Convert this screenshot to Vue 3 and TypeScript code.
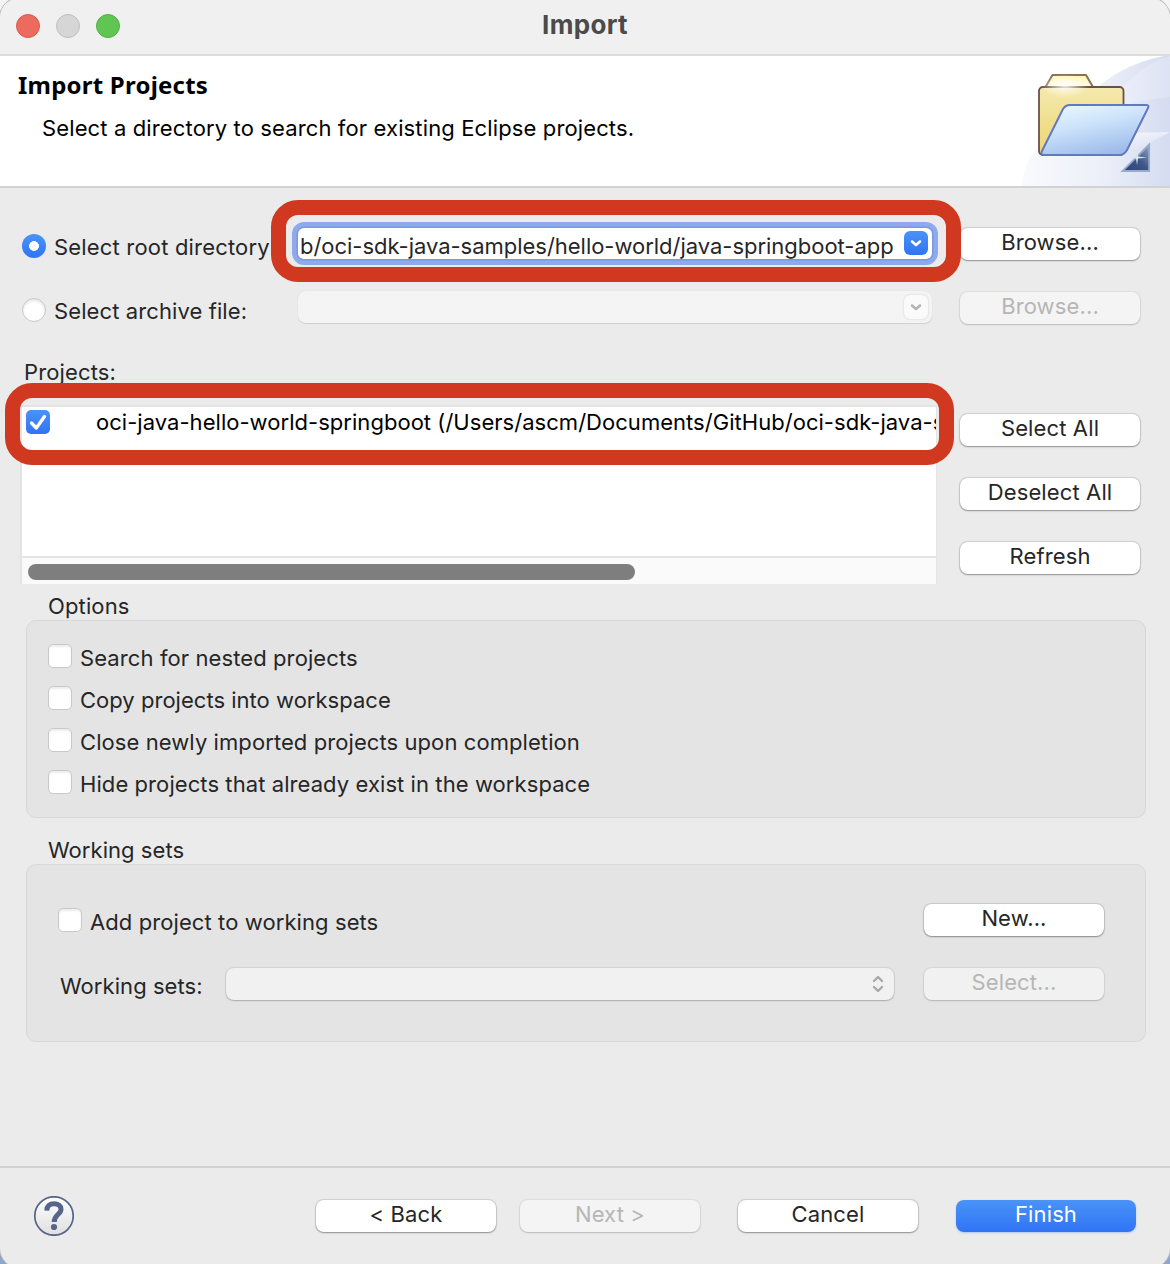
<script setup lang="ts">
import { ref } from 'vue'

interface Option {
  label: string
  spacing: string
  checked: boolean
}

const source = ref<'directory' | 'archive'>('directory')
const projectChecked = ref(true)
const addToSets = ref(false)
const options = ref<Option[]>([
  { label: 'Search for nested projects', spacing: '0.1px', checked: false },
  { label: 'Copy projects into workspace', spacing: '0.02px', checked: false },
  { label: 'Close newly imported projects upon completion', spacing: '0.08px', checked: false },
  { label: 'Hide projects that already exist in the workspace', spacing: '0.08px', checked: false },
])
</script>

<template>
  <div class="desktop">
    <div class="window">
      <header class="titlebar">
        <div class="lights">
          <i class="light close"></i>
          <i class="light minimize"></i>
          <i class="light zoom"></i>
        </div>
        <span class="title">Import</span>
      </header>

      <section class="banner">
        <div class="banner-text">
          <h1>Import Projects</h1>
          <p>Select a directory to search for existing Eclipse projects.</p>
        </div>
        <svg class="banner-art" width="150" height="130" viewBox="1020 56 150 130">
          <defs>
            <linearGradient id="swoosh" x1="0" x2="1" y1="0" y2="0">
              <stop offset="0" stop-color="#f9fafd" />
              <stop offset="0.55" stop-color="#eceff9" />
              <stop offset="1" stop-color="#d5dcf1" />
            </linearGradient>
            <linearGradient id="tab" x1="0" x2="0" y1="0" y2="1">
              <stop offset="0" stop-color="#fbf4b4" />
              <stop offset="1" stop-color="#fffbe0" />
            </linearGradient>
            <linearGradient id="back" x1="0" x2="0" y1="0" y2="1">
              <stop offset="0" stop-color="#f5e9ae" />
              <stop offset="1" stop-color="#ecd571" />
            </linearGradient>
            <linearGradient id="front" x1="0.25" x2="0.7" y1="0" y2="1">
              <stop offset="0" stop-color="#e8f6fe" />
              <stop offset="0.4" stop-color="#cbe2fa" />
              <stop offset="1" stop-color="#9ab8ea" />
            </linearGradient>
            <radialGradient id="shine">
              <stop offset="0" stop-color="#fff" />
              <stop offset="1" stop-color="#fff" stop-opacity="0" />
            </radialGradient>
            <linearGradient id="badge" x1="0" x2="1" y1="1" y2="0">
              <stop offset="0" stop-color="#29417a" />
              <stop offset="0.5" stop-color="#3d5688" />
              <stop offset="1" stop-color="#8ea3c6" />
            </linearGradient>
            <linearGradient id="haze" x1="0" x2="0" y1="0" y2="1">
              <stop offset="0" stop-color="#fff" stop-opacity="0.55" />
              <stop offset="1" stop-color="#fff" stop-opacity="0" />
            </linearGradient>
          </defs>
          <path d="M1022 186C1023 168 1030 155 1040 146L1092 92C1112 74 1136 60 1170 55V186Z" fill="url(#swoosh)" />
          <path d="M1100 118C1125 104 1145 99 1170 97V56C1140 66 1120 85 1100 118Z" fill="#fff" opacity="0.22" />
          <path d="M1128 133L1170 132C1158 138 1150 142 1140 150H1110Z" fill="url(#haze)" />
          <path d="M1045.500 87L1052.500 75H1086L1093 87Z" fill="url(#tab)" stroke="#8b6f5c" stroke-width="2" stroke-linejoin="round" />
          <rect x="1039" y="87" width="84.500" height="68" rx="4" fill="url(#back)" stroke="#6c4f49" stroke-width="1.800" />
          <ellipse cx="1065" cy="86" rx="24" ry="12" fill="url(#shine)" opacity="0.85" />
          <path d="M1070 105H1146Q1149.500 105 1148 108L1127 150Q1124 155 1120 155H1044Q1040 155 1042 151L1063 109Q1065.500 105 1070 105Z" fill="url(#front)" stroke="#6378c2" stroke-width="2" stroke-linejoin="round" />
          <path d="M1149.200 144.500V171H1122.500Z" fill="url(#badge)" stroke="#9aabc9" stroke-width="1.800" />
          <path d="M1137 149L1138 156.500L1147 157.500L1138 158.500L1137 165L1136 158.500L1129 157.500L1136 156.500Z" fill="#d8e8ee" />
        </svg>
      </section>

      <main class="content">
        <div class="source-row">
          <label class="source-label" @click="source = 'directory'">
            <i class="radio" :class="{ on: source === 'directory' }"></i>
            <span class="t-root">Select root directory</span>
          </label>
          <div class="combo focused">
            <span class="t-path">b/oci-sdk-java-samples/hello-world/java-springboot-app</span>
            <i class="drop">
              <svg width="24" height="24" viewBox="0 0 24 24"><path d="M8 10.500L12 14L16 10.500" /></svg>
            </i>
          </div>
          <button class="btn">Browse...</button>
        </div>

        <div class="source-row second">
          <label class="source-label" @click="source = 'archive'">
            <i class="radio" :class="{ on: source === 'archive' }"></i>
            <span class="t-archive">Select archive file:</span>
          </label>
          <div class="combo dim">
            <i class="drop">
              <svg width="24" height="24" viewBox="0 0 24 24"><path d="M8 10.500L12 14L16 10.500" /></svg>
            </i>
          </div>
          <button class="btn dim" disabled>Browse...</button>
        </div>

        <div class="projects-label">Projects:</div>
        <div class="projects">
          <div class="list">
            <div class="list-row" @click="projectChecked = !projectChecked">
              <i class="check" :class="{ on: projectChecked }">
                <svg v-if="projectChecked" width="24" height="24" viewBox="0 0 24 24"><path d="M5.500 13L10.300 18L18.500 6.500" /></svg>
              </i>
              <span class="t-item">oci-java-hello-world-springboot (/Users/ascm/Documents/GitHub/oci-sdk-java-s</span>
            </div>
            <div class="scroll"><div class="thumb"></div></div>
          </div>
          <div class="side">
            <button class="btn">Select All</button>
            <button class="btn">Deselect All</button>
            <button class="btn">Refresh</button>
          </div>
        </div>

        <div class="group-label t-options">Options</div>
        <div class="group options">
          <label v-for="o in options" :key="o.label" class="opt" @click="o.checked = !o.checked">
            <i class="check" :class="{ on: o.checked }"></i>
            <span :style="{ letterSpacing: o.spacing }">{{ o.label }}</span>
          </label>
        </div>

        <div class="group-label t-sets">Working sets</div>
        <div class="group sets">
          <div class="sets-row">
            <label class="opt add" @click="addToSets = !addToSets">
              <i class="check" :class="{ on: addToSets }"></i>
              <span class="t-add">Add project to working sets</span>
            </label>
            <button class="btn">New...</button>
          </div>
          <div class="sets-row lower">
            <span class="sets-label">Working sets:</span>
            <div class="select">
              <svg width="12" height="18" viewBox="0 0 12 18"><path d="M2 6L6 2L10 6M2 12L6 16L10 12" /></svg>
            </div>
            <button class="btn dim" disabled>Select...</button>
          </div>
        </div>
      </main>

      <footer class="footer">
        <svg class="help" width="40" height="40" viewBox="0 0 40 40">
          <defs>
            <linearGradient id="help" x1="0" x2="0" y1="0" y2="1">
              <stop offset="0" stop-color="#fff" />
              <stop offset="1" stop-color="#dfdfdf" />
            </linearGradient>
          </defs>
          <circle cx="20" cy="20" r="19.200" fill="url(#help)" stroke="#566689" stroke-width="1.700" />
          <path d="M12.800 14.600C12.900 10 15.800 7.700 20 7.700C24.400 7.700 27 9.700 27 13.200C27 18.300 20.200 18.500 20.200 26" fill="none" stroke="#566689" stroke-width="5" />
          <circle cx="20" cy="31" r="3.100" fill="#566689" />
        </svg>
        <button class="btn back">&lt; Back</button>
        <button class="btn dim next" disabled>Next &gt;</button>
        <button class="btn cancel">Cancel</button>
        <button class="btn primary">Finish</button>
      </footer>

      <div class="marker marker-directory"></div>
      <div class="marker marker-project"></div>
    </div>
  </div>
</template>

<style>
body {
  margin: 0;
}
</style>

<style scoped>
* {
  box-sizing: border-box;
}
.desktop {
  width: 1170px;
  height: 1264px;
  overflow: hidden;
  background: linear-gradient(#f4f4f4 0 50%, #8fa5cb 50% 100%);
  font: 22px/28px Inter, 'Liberation Sans', sans-serif;
  letter-spacing: 0.13px;
  color: #262626;
}
.window {
  position: relative;
  display: flex;
  flex-direction: column;
  height: 1270px;
  margin-top: -2px;
  border-radius: 20px;
  background: #ebebeb;
  overflow: hidden;
  box-shadow: 0 0 0 1px #b5b5b5;
}
.titlebar {
  display: grid;
  grid-template-columns: 1fr auto 1fr;
  align-items: center;
  height: 58px;
  flex: none;
  padding: 2px 16px 4px;
  background: #f0f0f0;
  border-bottom: 2px solid #dcdcdc;
}
.lights {
  display: flex;
  gap: 16px;
  margin-top: 2px;
}
.light {
  width: 24px;
  height: 24px;
  border-radius: 50%;
}
.close {
  background: #ed6a5e;
  border: 1px solid #d9584d;
}
.minimize {
  background: #d6d6d6;
  border: 1px solid #bdbdbd;
}
.zoom {
  background: #61c554;
  border: 1px solid #50b044;
}
.title {
  font-size: 26px;
  font-weight: 700;
  letter-spacing: 0.3px;
  color: #4b4b4b;
}
.banner {
  display: flex;
  justify-content: space-between;
  height: 132px;
  flex: none;
  background: #fff;
  border-bottom: 2px solid #d2d2d2;
  color: #000;
}
.banner-text {
  padding-left: 18px;
}
h1 {
  margin: 13px 0 0;
  font: 700 24px/32px 'Noto Sans', 'Open Sans', sans-serif;
  letter-spacing: 0.22px;
}
.banner p {
  margin: 13px 0 0 24px;
}
.content {
  flex: none;
  height: 978px;
  padding: 37px 24px 0 22px;
}
.source-row {
  display: flex;
  height: 40px;
}
.source-row.second {
  margin-top: 24px;
}
.source-label {
  display: flex;
  width: 276px;
  padding-top: 9px;
  white-space: nowrap;
}
.source-label span {
  margin: -1px 0 0 8px;
}
.t-root {
  letter-spacing: 0.18px;
}
.t-archive {
  letter-spacing: 0.1px;
}
.radio {
  width: 24px;
  height: 24px;
  border-radius: 50%;
  background: #fff;
  border: 1px solid #c6c6c6;
  box-shadow: inset 0 2px 3px rgba(0, 0, 0, 0.1);
}
.radio.on {
  border: 0;
  background: radial-gradient(circle, #fff 0 4.600px, transparent 5.200px), linear-gradient(#4a93f8, #3074f5);
  box-shadow: none;
}
.combo {
  display: flex;
  justify-content: space-between;
  width: 634px;
  height: 32px;
  margin-top: 3px;
  padding: 3px 4px 0 2px;
  border-radius: 8px;
  background: #fff;
  white-space: nowrap;
}
.combo.focused {
  height: 31px;
  border-radius: 6px;
  box-shadow: 0 0 0 1.500px #7b98e0, 0 0 0 6px #8ea9ec;
}
.combo.focused span {
  margin-top: 1px;
  letter-spacing: -0.025px;
}
.combo.dim {
  margin-top: 2px;
  background: #f4f4f4;
  justify-content: flex-end;
  box-shadow: 0 1px 1px #cfcfcf, 0 0 1px #d8d8d8;
}
.drop {
  display: block;
  width: 24px;
  height: 24px;
  flex: none;
  border-radius: 6px;
  background: linear-gradient(#4a93f8, #3074f5);
}
.drop svg {
  display: block;
  fill: none;
  stroke: #fff;
  stroke-width: 2.600;
  stroke-linecap: round;
  stroke-linejoin: round;
}
.combo.dim .drop {
  margin-top: 1px;
  background: #fafafa;
  box-shadow: 0 0 2px #c4c4c4;
}
.combo.dim .drop svg {
  stroke: #b5b5b5;
}
.btn {
  display: block;
  width: 180px;
  height: 32px;
  flex: none;
  margin: 0;
  padding: 0 0 4px;
  border: 0;
  border-radius: 8px;
  background: #fff;
  box-shadow: 0 1px 1.500px rgba(0, 0, 0, 0.3), 0 0 1px 0.500px rgba(0, 0, 0, 0.12);
  font: inherit;
  line-height: 28px;
  letter-spacing: inherit;
  color: #262626;
  text-align: center;
}
.btn.dim {
  background: #f4f4f4;
  color: #b6b6b6;
  box-shadow: 0 1px 1.500px rgba(0, 0, 0, 0.16), 0 0 1px 0.500px rgba(0, 0, 0, 0.06);
}
.btn.primary {
  background: linear-gradient(#4a93f8, #3074f5);
  color: #fff;
  box-shadow: 0 1px 2px rgba(48, 116, 245, 0.3);
}
.source-row .btn {
  margin: 3px 0 0 28px;
}
.projects-label {
  margin: 29px 0 0 2px;
}
.projects {
  display: flex;
  margin-top: 19px;
}
.list {
  display: flex;
  flex-direction: column;
  justify-content: space-between;
  width: 917px;
  height: 179px;
  margin-left: -2px;
  border: 2px solid #e4e4e4;
  border-right-width: 1px;
  border-bottom: 0;
  background: #fff;
}
.list-row {
  display: flex;
  padding: 3px 0 0 4px;
  overflow: hidden;
  white-space: nowrap;
  color: #000;
}
.list-row span {
  margin: -2px 0 0 46px;
  letter-spacing: 0.035px;
}
.check {
  display: block;
  width: 24px;
  height: 24px;
  flex: none;
  border-radius: 5px;
  background: #fff;
  border: 1px solid #c9c9c9;
  box-shadow: inset 0 2px 2px rgba(0, 0, 0, 0.08);
}
.check.on {
  border: 0;
  background: linear-gradient(#4a93f8, #3074f5);
  box-shadow: none;
}
.check svg {
  display: block;
  fill: none;
  stroke: #fff;
  stroke-width: 3.300;
  stroke-linecap: round;
  stroke-linejoin: round;
}
.scroll {
  height: 28px;
  padding: 6px;
  border-top: 2px solid #e4e4e4;
  background: #fafafa;
}
.thumb {
  width: 607px;
  height: 16px;
  border-radius: 8px;
  background: #7e7e7e;
}
.side {
  display: flex;
  flex-direction: column;
  gap: 32px;
  margin: 9px 0 0 23px;
}
.group-label {
  margin: 8px 0 0 26px;
}
.group {
  width: 1120px;
  margin: 0 0 0 4px;
  border: 1px solid #d8d8d8;
  border-radius: 10px;
  background: #e4e4e4;
}
.options {
  height: 198px;
  padding: 23px 21px;
}
.opt {
  display: flex;
  height: 42px;
}
.opt span {
  margin: 0 0 0 8px;
}
.t-add {
  letter-spacing: 0.09px;
}
.group-label.t-sets {
  margin-top: 18px;
  letter-spacing: 0.05px;
}
.sets {
  height: 178px;
  padding: 39px 41px 0 31px;
}
.sets-row {
  display: flex;
  justify-content: space-between;
  height: 64px;
}
.opt.add {
  padding-top: 4px;
}
.sets-label {
  width: 167px;
  padding: 4px 0 0 2px;
  letter-spacing: 0.06px;
}
.select {
  display: flex;
  justify-content: flex-end;
  align-items: center;
  width: 668px;
  height: 32px;
  margin-right: 30px;
  padding-right: 10px;
  border-radius: 8px;
  background: #f1f1f1;
  box-shadow: 0 1px 1.500px rgba(0, 0, 0, 0.2), 0 0 1px 0.500px rgba(0, 0, 0, 0.07);
}
.select svg {
  fill: none;
  stroke: #a9a9a9;
  stroke-width: 2.400;
  stroke-linecap: round;
  stroke-linejoin: round;
}
.sets .btn.dim {
  background: #f1f1f1;
}
.footer {
  display: flex;
  flex: 1;
  border-top: 2px solid #d2d2d2;
  padding: 32px 34px 0;
}
.help {
  margin: -4px 242px 0 0;
}
.next {
  margin-left: 24px;
}
.cancel {
  margin-left: 38px;
}
.primary {
  margin-left: 38px;
}
.marker {
  position: absolute;
  border: 15px solid #d03820;
  border-radius: 27px;
  pointer-events: none;
}
.marker-directory {
  left: 271px;
  top: 202px;
  width: 690px;
  height: 82px;
}
.marker-project {
  left: 5px;
  top: 385px;
  width: 949px;
  height: 82px;
}
</style>
